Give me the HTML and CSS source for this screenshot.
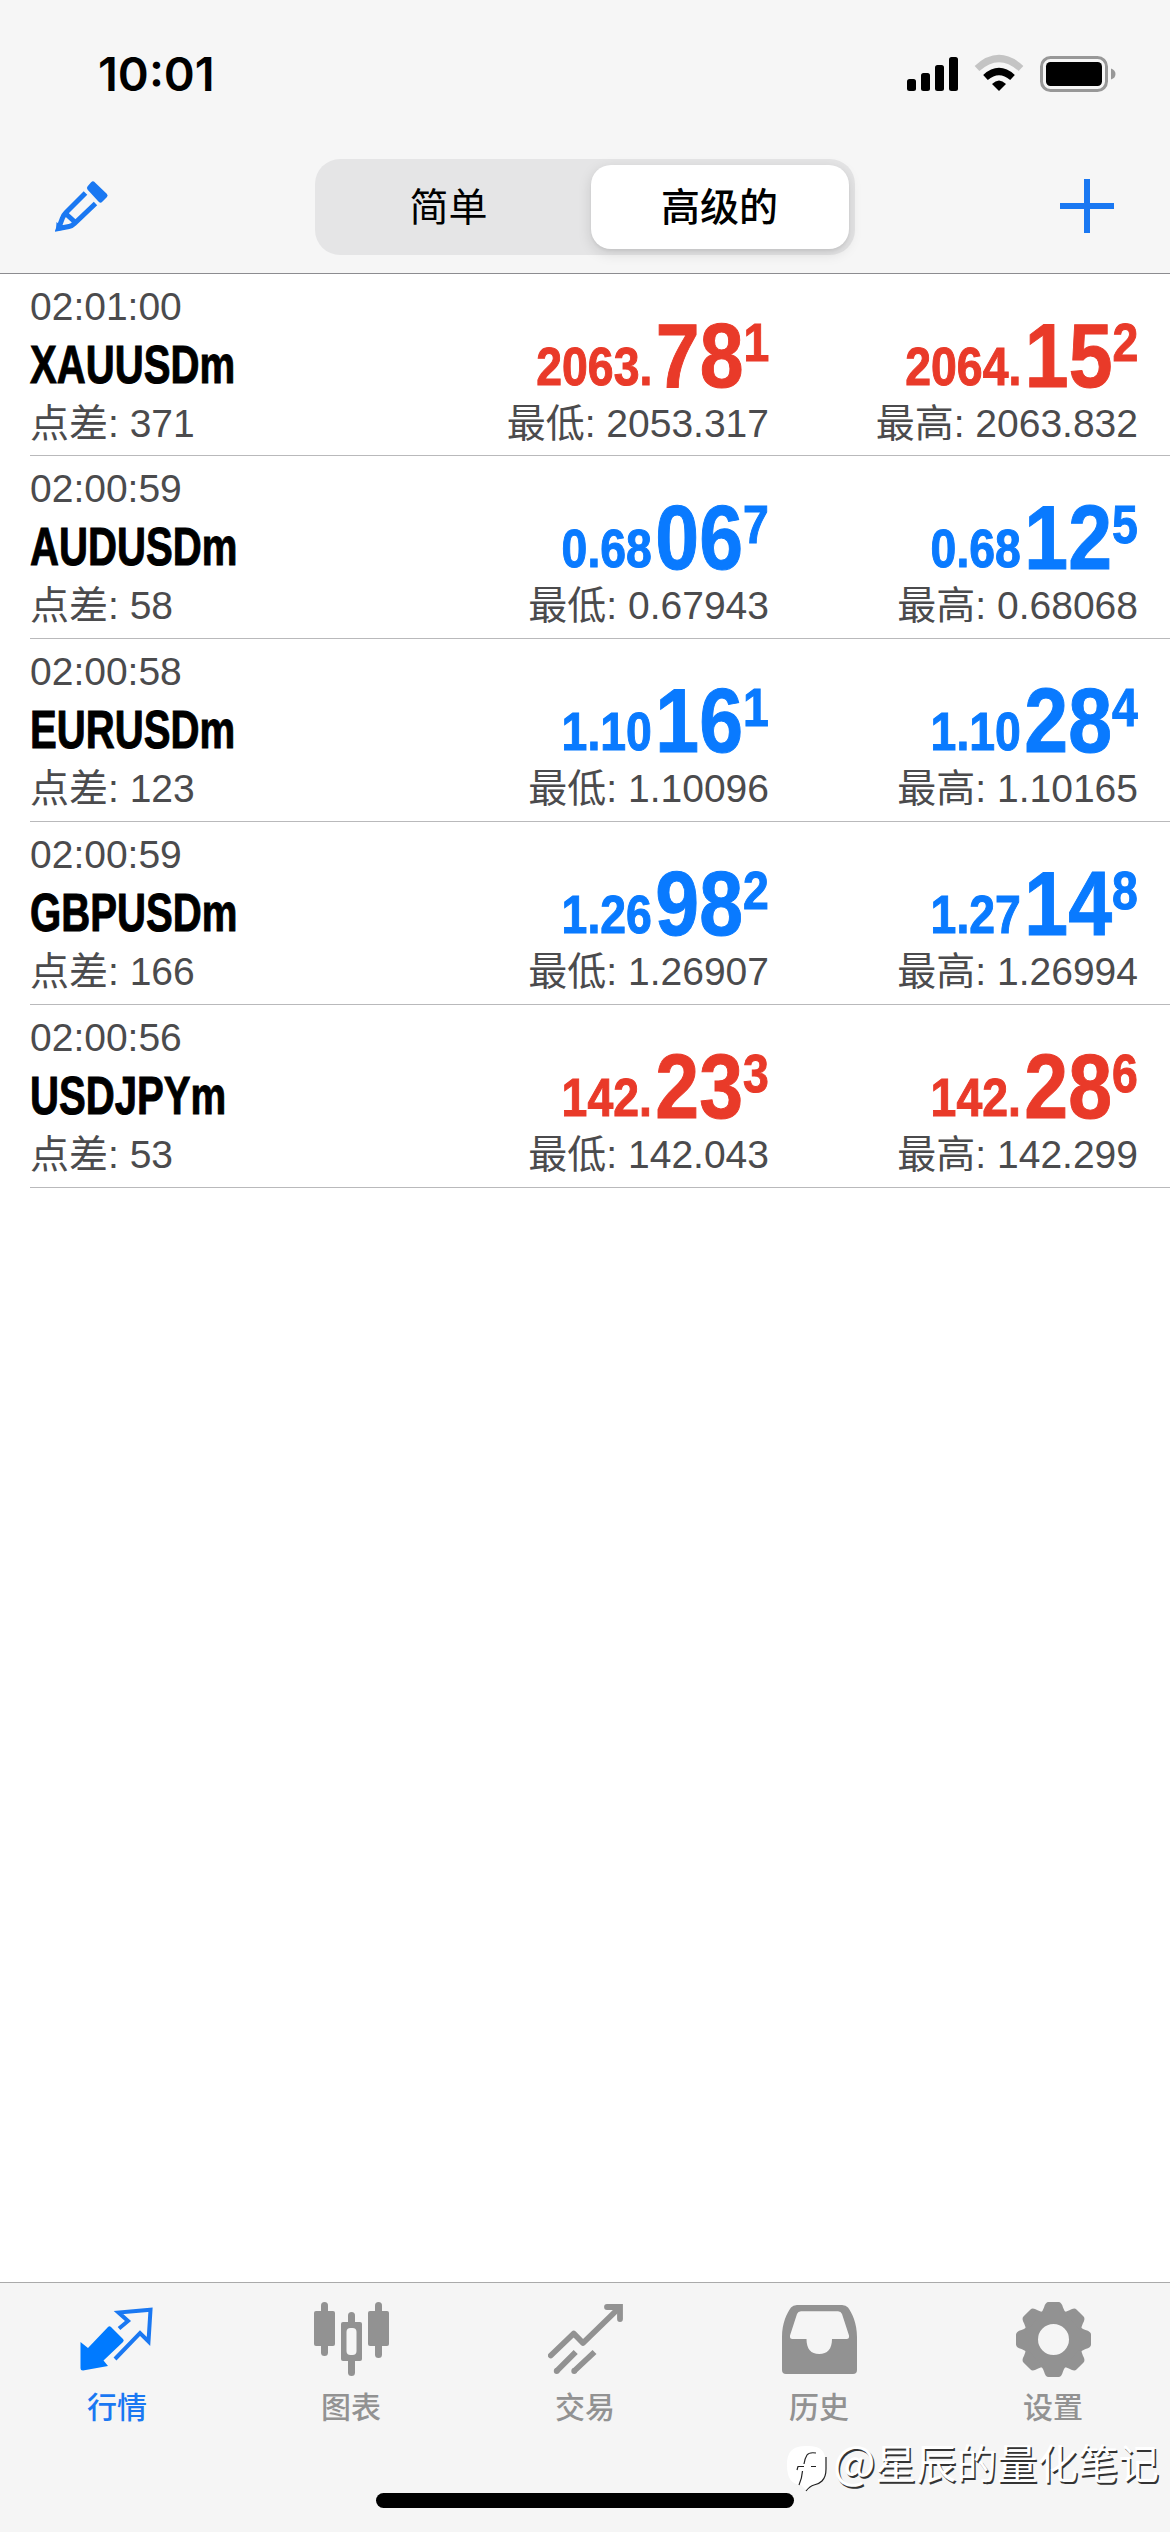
FILE: index.html
```html
<!DOCTYPE html>
<html lang="zh-CN">
<head>
<meta charset="utf-8">
<title>行情</title>
<link rel="stylesheet" href="styles.css">
</head>
<body>
<div class="app">
  <header class="header">
    <div class="status">
      <span class="clock">10:01</span>
      <svg class="status-icons" width="210" height="40" viewBox="906 54 210 40">
        <rect x="907" y="79" width="9" height="12" rx="2.5"/>
        <rect x="921" y="73" width="9" height="18" rx="2.5"/>
        <rect x="935" y="65" width="9" height="26" rx="2.5"/>
        <rect x="949" y="57" width="9" height="34" rx="2.5"/>
        <path d="M977 68.500Q999 48.500 1021 68.500" fill="none" stroke="#c4c4c4" stroke-width="7"/>
        <path d="M985.500 77.500Q999 65.500 1012.500 77.500" fill="none" stroke="#000" stroke-width="7"/>
        <path d="M992 84Q999 77 1006 84L999 91Z"/>
        <rect x="1041.500" y="57.500" width="65" height="33" rx="9" fill="none" stroke="#989898" stroke-width="3"/>
        <rect x="1046" y="62" width="56" height="24" rx="4.500"/>
        <path d="M1111 68.500Q1115.500 70 1115.500 74T1111 79.500Z" fill="#989898"/>
      </svg>
    </div>
    <nav class="navbar">
      <svg class="edit" width="54" height="54" viewBox="0 0 54 54" fill="none" stroke="#1a78f2" stroke-width="5">
        <path d="M30.500 14L11 33.500Q8.500 36 7.500 39L3.500 49.500L14 47.500Q17 47 19.500 44.500L40.500 24.500M10.500 34.500L20.500 43.500"/>
        <path d="M1.500 43L1 52L10 50.500Z" fill="#1a78f2" stroke="none"/>
        <path d="M34.500 9L38 5L50 16.500L45.500 21Z" fill="#1a78f2" stroke-linejoin="round"/>
      </svg>
      <div class="segments">
        <span class="segment">简单</span>
        <span class="segment active">高级的</span>
      </div>
      <svg class="add" width="54" height="54" viewBox="0 0 54 54" stroke="#1a78f2" stroke-width="6"><path d="M0 27H54M27 0V54"/></svg>
    </nav>
  </header>

  <main class="quotes">
    <article class="quote down">
      <div class="info"><span class="time">02:01:00</span><b class="symbol">XAUUSDm</b><span class="meta">点差: 371</span></div>
      <div class="side"><div class="price"><span class="base">2063.</span><span class="big">78</span><span class="pip">1</span></div><span class="meta">最低: 2053.317</span></div>
      <div class="side"><div class="price"><span class="base">2064.</span><span class="big">15</span><span class="pip">2</span></div><span class="meta">最高: 2063.832</span></div>
    </article>
    <article class="quote up">
      <div class="info"><span class="time">02:00:59</span><b class="symbol">AUDUSDm</b><span class="meta">点差: 58</span></div>
      <div class="side"><div class="price"><span class="base">0.68</span><span class="big">06</span><span class="pip">7</span></div><span class="meta">最低: 0.67943</span></div>
      <div class="side"><div class="price"><span class="base">0.68</span><span class="big">12</span><span class="pip">5</span></div><span class="meta">最高: 0.68068</span></div>
    </article>
    <article class="quote up">
      <div class="info"><span class="time">02:00:58</span><b class="symbol">EURUSDm</b><span class="meta">点差: 123</span></div>
      <div class="side"><div class="price"><span class="base">1.10</span><span class="big">16</span><span class="pip">1</span></div><span class="meta">最低: 1.10096</span></div>
      <div class="side"><div class="price"><span class="base">1.10</span><span class="big">28</span><span class="pip">4</span></div><span class="meta">最高: 1.10165</span></div>
    </article>
    <article class="quote up">
      <div class="info"><span class="time">02:00:59</span><b class="symbol">GBPUSDm</b><span class="meta">点差: 166</span></div>
      <div class="side"><div class="price"><span class="base">1.26</span><span class="big">98</span><span class="pip">2</span></div><span class="meta">最低: 1.26907</span></div>
      <div class="side"><div class="price"><span class="base">1.27</span><span class="big">14</span><span class="pip">8</span></div><span class="meta">最高: 1.26994</span></div>
    </article>
    <article class="quote down">
      <div class="info"><span class="time">02:00:56</span><b class="symbol">USDJPYm</b><span class="meta">点差: 53</span></div>
      <div class="side"><div class="price"><span class="base">142.</span><span class="big">23</span><span class="pip">3</span></div><span class="meta">最低: 142.043</span></div>
      <div class="side"><div class="price"><span class="base">142.</span><span class="big">28</span><span class="pip">6</span></div><span class="meta">最高: 142.299</span></div>
    </article>
  </main>

  <footer class="tabbar">
    <nav class="tabs">
      <a class="tab selected">
        <svg width="75" height="75" viewBox="0 0 75 75">
          <path d="M.5 40L8 46L28 25Q29.500 23.500 31 25L43 37Q44.500 38.500 43 40L23.500 58.500L28 64L3 68.500Q.5 68.500 .5 66Z" fill="#007aff"/>
          <path d="M39 26.500L48 19L38.500 10.500L70.500 7.800L68.500 39.500L60 31L35 57" fill="none" stroke="#1a78f2" stroke-width="4"/>
        </svg>
        <span>行情</span>
      </a>
      <a class="tab">
        <svg width="75" height="75" viewBox="0 0 75 75" fill="#929292">
          <rect x="0" y="9" width="21" height="35" rx="2"/><rect x="7" y="0" width="7" height="54" rx="3.500"/>
          <rect x="54" y="9" width="21" height="35" rx="2"/><rect x="61" y="0" width="7" height="56" rx="3.500"/>
          <rect x="27" y="20" width="21" height="39" rx="2"/><rect x="34" y="10" width="7" height="64" rx="3.500"/>
          <rect x="32.500" y="26" width="10" height="27" rx="4" fill="#f5f5f5"/>
        </svg>
        <span>图表</span>
      </a>
      <a class="tab">
        <svg width="75" height="75" viewBox="0 0 75 75" fill="none" stroke="#929292" stroke-width="5.800">
          <path d="M2.800 53.500L25.700 31.500L35 41L71 6" stroke-linecap="round" stroke-linejoin="round"/>
          <path d="M59 5H72V17" stroke-linecap="round"/>
          <path d="M8.700 69L27.700 50M26.200 69L46.500 50"/>
          <path d="M8.700 69h.01M26.200 69h.01" stroke-linecap="round"/>
        </svg>
        <span>交易</span>
      </a>
      <a class="tab">
        <svg width="75" height="75" viewBox="0 0 75 75">
          <path fill="#929292" fill-rule="evenodd" d="M0 68V35C0 21 5 11 9 5.500Q11 3 15 3H60Q64 3 66 5.500C70 11 75 21 75 35V68Q75 72 71 72H4Q0 72 0 68ZM19 9.300Q16 9.300 15 12L8 33.500Q7.500 37 10.500 37H24.500C24.500 47 29 52 37.200 52S50 47 50 37H64.500Q67.500 37 67 33.500L60 12Q59 9.300 56 9.300Z"/>
        </svg>
        <span>历史</span>
      </a>
      <a class="tab">
        <svg width="75" height="75" viewBox="-37.5 -37.5 75 75" fill="#929292">
          <defs><path id="tooth" d="M-13 -26Q-10.500 -29 -9.500 -32Q-8 -37.500 -5 -37.500H5Q8 -37.500 9.500 -32Q10.500 -29 13 -26Z"/></defs>
          <circle r="22.500" fill="none" stroke="#929292" stroke-width="14"/>
          <use href="#tooth"/><use href="#tooth" transform="rotate(45)"/><use href="#tooth" transform="rotate(90)"/><use href="#tooth" transform="rotate(135)"/><use href="#tooth" transform="rotate(180)"/><use href="#tooth" transform="rotate(225)"/><use href="#tooth" transform="rotate(270)"/><use href="#tooth" transform="rotate(315)"/>
        </svg>
        <span>设置</span>
      </a>
    </nav>
    <div class="home-indicator"></div>
    <div class="watermark">
      <svg width="44" height="48" viewBox="0 0 44 48">
        <path d="M20 1C34 1 39 6 39 20C39 34 36 38 27 40L20 46L14 40C5 39 0 34 0 20C0 6 6 1 20 1Z" fill="#fff"/>
        <path d="M39 12V24Q39 32 35 36Q32 39 27 40Q23 41 19 46M29 8Q22 7 20 10Q18 13 17 19M15.500 26Q15 33 12 40M10 25L11 21.500H17M24 21.500H29" fill="none" stroke="#222" stroke-width="1.200"/>
      </svg>
      <span><span class="at">@</span>星辰的量化笔记</span>
    </div>
  </footer>
</div>
</body>
</html>
```
FILE: styles.css
```css
* { box-sizing: border-box; }
body {
  margin: 0;
  background: #fff;
  color: #000;
  font-family: "Liberation Sans", "Noto Sans CJK SC", sans-serif;
}
.app { width: 1170px; height: 2532px; display: flex; flex-direction: column; }

.header { height: 274px; background: #f6f6f6; border-bottom: 1px solid #8c8c90; }
.status {
  height: 147px;
  padding: 0 54px 0 98px;
  display: flex;
  justify-content: space-between;
  align-items: flex-start;
}
.clock { font: 600 47px/56px Inter, sans-serif; letter-spacing: 0; margin-top: 46px; }
.status-icons { margin-top: 54px; }
.navbar { height: 120px; padding: 0 56px 0 55px; display: flex; justify-content: space-between; align-items: center; }
.edit, .add { margin-bottom: 3px; }
.segments {
  width: 540px;
  height: 96px;
  padding: 6px;
  border-radius: 25px;
  display: flex;
  background: #e5e5e6;
}
.segment {
  flex: 0 0 270px;
  display: flex;
  align-items: center;
  justify-content: center;
  font: 400 39px/1 "Noto Sans CJK SC", sans-serif;
  padding: 0 14px 5px 0;
}
.segment.active {
  flex: 0 0 258px;
  background: #fff;
  border-radius: 20px;
  font-weight: 500;
  padding: 0 0 5px;
  box-shadow: 0 4px 14px rgba(0, 0, 0, .13), 0 2px 3px rgba(0, 0, 0, .05);
}

.quotes { flex: 1; padding-left: 30px; }
.quote {
  height: 183px;
  display: grid;
  grid-template-columns: 1fr 369px 369px;
  padding-right: 32px;
  border-bottom: 1px solid #b9b9bb;
}
.quote:first-child { height: 182px; }
.info, .side { display: flex; flex-direction: column; }
.info { padding-top: 10px; }
.time { font-size: 39px; line-height: 46px; color: #4b4b4d; }
.symbol {
  font-size: 53.500px;
  line-height: 64px;
  margin: 3px 0 4px;
  transform: scaleX(.75);
  transform-origin: left;
  -webkit-text-stroke: 1px #000;
}
.meta { font-size: 39px; line-height: 46px; color: #4b4b4d; white-space: nowrap; }
.side { padding-top: 37px; align-items: flex-end; }
.price {
  height: 90px;
  font-size: 90px;
  line-height: 90px;
  font-weight: 700;
  white-space: nowrap;
  transform: scaleX(.875);
  transform-origin: right;
  -webkit-text-stroke: 1px currentColor;
}
.price span { line-height: 0; }
.base { font-size: 53px; vertical-align: 2px; margin-right: 4px; }
.pip { font-size: 53px; vertical-align: 26px; }
.up .price { color: #097aff; }
.down .price { color: #e93a29; }

.tabbar { height: 250px; background: #f5f5f5; border-top: 1px solid #aaa; position: relative; }
.tabs { display: flex; padding-top: 19px; }
.tab {
  flex: 1;
  display: flex;
  flex-direction: column;
  align-items: center;
  gap: 8px;
  color: #929292;
  font: 500 30px/40px "Noto Sans CJK SC", sans-serif;
}
.tab.selected { color: #1a78f2; }
.home-indicator { width: 418px; height: 15px; border-radius: 8px; background: #000; margin: 68px auto 0; }
.watermark {
  position: absolute;
  right: 11px;
  bottom: 39px;
  display: flex;
  align-items: flex-end;
  gap: 2px;
  color: #fff;
  font: 400 40.500px/62px "Noto Sans CJK SC", sans-serif;
  text-shadow: 1.500px 1.500px 0 #333;
  white-space: nowrap;
}
.at { font-size: 45px; line-height: 0; }
```
